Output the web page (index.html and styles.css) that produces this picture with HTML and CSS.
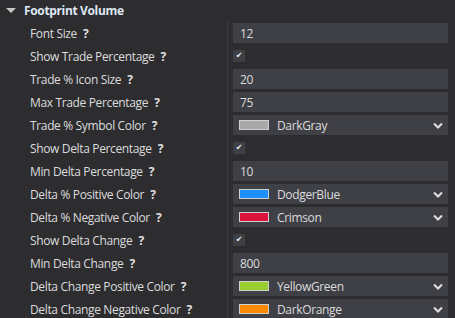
FILE: index.html
```html
<!DOCTYPE html>
<html lang="en">
<head>
  <title>Footprint Volume</title>
  <link rel="stylesheet" href="styles.css">
</head>
<body>

  <div class="group">
    <div class="group-head">
      <span class="caret"></span>
      <span class="group-title">Footprint Volume</span>
    </div>

    <div class="props">
      <div class="row">
        <div class="name">Font Size <span class="help">?</span></div>
        <div class="value"><div class="field">12</div></div>
      </div>
      <div class="row">
        <div class="name">Show Trade Percentage <span class="help">?</span></div>
        <div class="value"><div class="check">&#10004;</div></div>
      </div>
      <div class="row">
        <div class="name">Trade % Icon Size <span class="help">?</span></div>
        <div class="value"><div class="field">20</div></div>
      </div>
      <div class="row">
        <div class="name">Max Trade Percentage <span class="help">?</span></div>
        <div class="value"><div class="field">75</div></div>
      </div>
      <div class="row">
        <div class="name">Trade % Symbol Color <span class="help">?</span></div>
        <div class="value">
          <div class="field color">
            <span class="swatch" style="background: #a9a9a9"></span>
            <span class="color-name">DarkGray</span>
            <svg class="chevron" width="10" height="7" viewBox="0 0 10 7"><path d="M1 1.5 L5 5.5 L9 1.5" fill="none" stroke="#e0e0e0" stroke-width="2"/></svg>
          </div>
        </div>
      </div>
      <div class="row">
        <div class="name">Show Delta Percentage <span class="help">?</span></div>
        <div class="value"><div class="check">&#10004;</div></div>
      </div>
      <div class="row">
        <div class="name">Min Delta Percentage <span class="help">?</span></div>
        <div class="value"><div class="field">10</div></div>
      </div>
      <div class="row">
        <div class="name">Delta % Positive Color <span class="help">?</span></div>
        <div class="value">
          <div class="field color">
            <span class="swatch" style="background: #1e90ff"></span>
            <span class="color-name">DodgerBlue</span>
            <svg class="chevron" width="10" height="7" viewBox="0 0 10 7"><path d="M1 1.5 L5 5.5 L9 1.5" fill="none" stroke="#e0e0e0" stroke-width="2"/></svg>
          </div>
        </div>
      </div>
      <div class="row">
        <div class="name">Delta % Negative Color <span class="help">?</span></div>
        <div class="value">
          <div class="field color">
            <span class="swatch" style="background: #dc143c"></span>
            <span class="color-name">Crimson</span>
            <svg class="chevron" width="10" height="7" viewBox="0 0 10 7"><path d="M1 1.5 L5 5.5 L9 1.5" fill="none" stroke="#e0e0e0" stroke-width="2"/></svg>
          </div>
        </div>
      </div>
      <div class="row">
        <div class="name">Show Delta Change <span class="help">?</span></div>
        <div class="value"><div class="check">&#10004;</div></div>
      </div>
      <div class="row">
        <div class="name">Min Delta Change <span class="help">?</span></div>
        <div class="value"><div class="field">800</div></div>
      </div>
      <div class="row">
        <div class="name">Delta Change Positive Color <span class="help">?</span></div>
        <div class="value">
          <div class="field color">
            <span class="swatch" style="background: #9acd32"></span>
            <span class="color-name">YellowGreen</span>
            <svg class="chevron" width="10" height="7" viewBox="0 0 10 7"><path d="M1 1.5 L5 5.5 L9 1.5" fill="none" stroke="#e0e0e0" stroke-width="2"/></svg>
          </div>
        </div>
      </div>
      <div class="row">
        <div class="name">Delta Change Negative Color <span class="help">?</span></div>
        <div class="value">
          <div class="field color">
            <span class="swatch" style="background: #ff8c00"></span>
            <span class="color-name">DarkOrange</span>
            <svg class="chevron" width="10" height="7" viewBox="0 0 10 7"><path d="M1 1.5 L5 5.5 L9 1.5" fill="none" stroke="#e0e0e0" stroke-width="2"/></svg>
          </div>
        </div>
      </div>
    </div>
  </div>

</body>
</html>
```

FILE: styles.css
```css
body {
  margin: 0;
  background-color: #2d2d30;
  color: #dcdcdc;
  font-family: "Open Sans", "Noto Sans", sans-serif;
  font-size: 12px;
  letter-spacing: -0.35px;
  overflow: hidden;
}

.group-head {
  display: flex;
  align-items: center;
  height: 20px;
  padding-left: 6px;
}

.caret {
  width: 0;
  height: 0;
  border-left: 5px solid transparent;
  border-right: 5px solid transparent;
  border-top: 5px solid #c8c8c8;
  margin-right: 8px;
  margin-top: 1px;
}

.group-title {
  font-weight: bold;
  color: #dfe7f5;
}

.props {
  position: relative;
  padding-top: 3px;
}

.props::before {
  content: "";
  position: absolute;
  left: 227px;
  top: 0;
  bottom: 0;
  width: 1px;
  background-color: #3b3b3f;
}

.row {
  display: flex;
  height: 20px;
  margin-bottom: 3px;
}

.name {
  width: 203px;
  padding-left: 30px;
  display: flex;
  align-items: center;
  white-space: nowrap;
}

.help {
  font-weight: bold;
  margin-left: 6px;
  color: #e0e0e0;
}

.value {
  flex: 1;
  padding-right: 7px;
  display: flex;
  align-items: center;
}

.field {
  flex: 1;
  height: 20px;
  background-color: #3f3f46;
  display: flex;
  align-items: center;
  padding-left: 7px;
}

.check {
  width: 12px;
  height: 12px;
  background-color: #3f3f46;
  color: #f0f0f0;
  font-family: "DejaVu Sans", sans-serif;
  font-weight: bold;
  font-size: 8px;
  line-height: 12px;
  text-align: center;
}

.color {
  padding-left: 6px;
}

.swatch {
  width: 28px;
  height: 8px;
  border: 1px solid #d0d0d0;
  margin-right: 8px;
}

.color-name {
  flex: 1;
}

.chevron {
  margin-right: 5px;
}
```
